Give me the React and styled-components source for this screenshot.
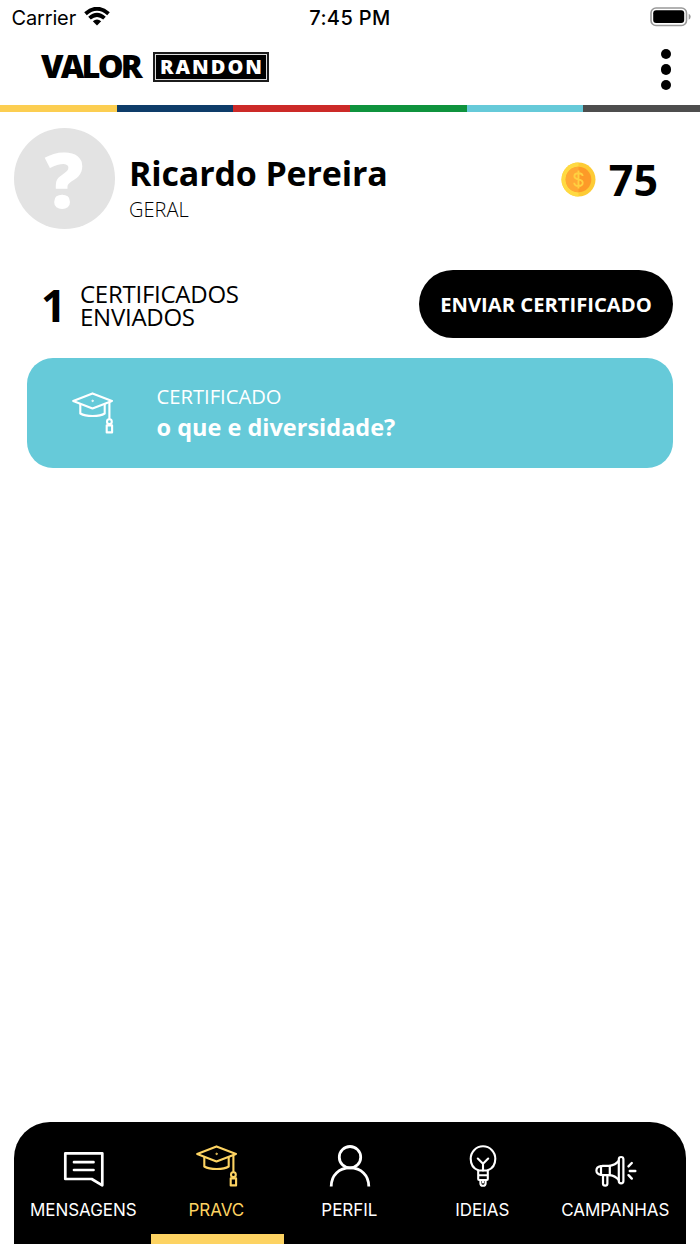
import styled, { createGlobalStyle } from "styled-components";

const tabs = [
  { label: "MENSAGENS", icon: MessageIcon },
  { label: "PRAVC", icon: CapIcon, active: true },
  { label: "PERFIL", icon: ProfileIcon },
  { label: "IDEIAS", icon: IdeaIcon },
  { label: "CAMPANHAS", icon: CampaignIcon },
];

const stripes = ["#fcce51", "#0e3c69", "#cc2a28", "#0f933d", "#66cad9", "#4d4d4d"];

function WifiIcon() {
  return (
    <svg width="26" height="19" viewBox="0 0 26 19">
      <g fill="none" stroke="#000" strokeWidth="3.9">
        <path d="M1.5 6.8 Q13 -3.3 24.5 6.8" />
        <path d="M5.5 11.1 Q13 4.6 20.5 11.1" />
      </g>
      <path d="M8.8 14.2 Q13 10.9 17.2 14.2 L13 18.4 Z" />
    </svg>
  );
}

function BatteryIcon() {
  return (
    <svg width="41" height="20" viewBox="0 0 41 20">
      <rect x="1" y="1" width="35.5" height="17.5" rx="5" fill="none" stroke="#999" strokeWidth="1.6" />
      <rect x="3.2" y="3.3" width="31" height="12.8" rx="3" />
      <path d="M38.7 6.8 Q40.7 7.7 40.7 9.8 Q40.7 12 38.7 12.8 Z" fill="#999" />
    </svg>
  );
}

function CoinIcon() {
  return (
    <svg width="35" height="35" viewBox="0 0 35 35">
      <circle cx="17.5" cy="17.5" r="17" fill="#fdcb35" />
      <path d="M17.5 .5 A17 17 0 0 0 17.5 34.5 Z" fill="#ffda42" />
      <circle cx="17.5" cy="17.5" r="12.8" fill="#fd9a28" />
      <path d="M17.5 4.7 A12.8 12.8 0 0 0 17.5 30.3 Z" fill="#ffa834" />
      <path
        d="M21.6 14.1 C21.6 11.8 19.8 11.2 17.5 11.2 C15 11.2 13.4 12.2 13.4 14.2 C13.4 16.4 15.2 16.9 17.5 17.4 C20 17.9 21.7 18.6 21.7 20.8 C21.7 23 19.9 24 17.5 24 C15 24 13.2 23 13.2 20.8 M17.5 8.6 V26.4"
        fill="none"
        stroke="#ffd040"
        strokeWidth="1.9"
      />
    </svg>
  );
}

function CapIcon() {
  return (
    <svg width="42" height="42" viewBox="0 0 42 42" fill="none" stroke="currentColor" strokeWidth="2.1" strokeLinejoin="round" strokeLinecap="round">
      <path d="M1.2 8.9 L20.5 1.4 L40 8.9 L20.5 16.4 Z" />
      <path d="M8.3 12.2 V21.5 C14 24.8 27.5 24.8 32.7 21.5 V12.2" />
      <path d="M37.4 10 V27" />
      <circle cx="37.4" cy="29.7" r="2.4" />
      <path d="M34.7 33.4 H40.1 V40.4 H34.7 Z" />
      <circle cx="20.5" cy="8.9" r=".7" strokeWidth="1" />
    </svg>
  );
}

function MessageIcon() {
  return (
    <svg width="42" height="42" viewBox="0 0 42 42" fill="none" stroke="currentColor" strokeWidth="2.7" strokeLinejoin="round" strokeLinecap="round">
      <path d="M2.3 8.3 H39.3 V40.3 L28.7 34 H2.3 Z" />
      <path d="M11 17.2 H30.5 M11 25 H30.5" />
    </svg>
  );
}

function ProfileIcon() {
  return (
    <svg width="42" height="42" viewBox="0 0 42 42" fill="none" stroke="currentColor" strokeWidth="2.8">
      <circle cx="21" cy="12.2" r="10.7" />
      <path d="M2.2 41.5 C2.2 30 10 22.9 21 22.9 C32 22.9 39.8 30 39.8 41.5" />
    </svg>
  );
}

function IdeaIcon() {
  return (
    <svg width="42" height="42" viewBox="0 0 42 42" fill="none" stroke="currentColor" strokeWidth="2.1" strokeLinejoin="round" strokeLinecap="round">
      <path d="M16.2 25.3 C11.5 23.6 8.7 19 8.7 13.8 C8.7 6.7 14.2 1.3 21 1.3 C27.8 1.3 33.3 6.7 33.3 13.8 C33.3 19 30.5 23.6 25.8 25.3" />
      <path d="M21 25.5 V18.8 M15.8 13.6 L21 18.8 L26.2 13.6" />
      <path d="M16.2 25.5 H25.8 V34 Q25.8 35 24.8 35 H17.2 Q16.2 35 16.2 34 Z M16.2 30.3 H25.8" />
      <path d="M18.4 35.2 V38.2 Q18.4 40.8 21 40.8 Q23.6 40.8 23.6 38.2 V35.2 M21 36.5 V37.5" />
    </svg>
  );
}

function CampaignIcon() {
  return (
    <svg width="42" height="42" viewBox="0 0 42 42" fill="none" stroke="currentColor" strokeWidth="2.2" strokeLinejoin="round" strokeLinecap="round">
      <rect x="23.8" y="12" width="4.6" height="26.4" rx="2.3" />
      <path d="M23.8 15.8 C21.2 19 18.4 20.4 14.8 20.8 V30.2 C18.4 30.6 21.2 32 23.8 35" />
      <path d="M14.8 20.8 H7.6 Q6 20.8 6 22.4 V28.6 Q6 30.2 7.6 30.2 H14.8" />
      <path d="M5.8 21.2 Q1.4 22 1.4 25.5 Q1.4 29 5.8 29.8" />
      <path d="M8 30.4 V38.5 Q8 40.6 10.2 40.6 Q12.4 40.6 12.4 38.5 V30.4" />
      <path d="M33.5 21.4 L36.8 18 M34.8 26 H40.3 M33.5 30.2 L36.8 33.6" strokeWidth="2.4" />
    </svg>
  );
}

function App() {
  return (
    <Container>
      <GlobalStyle />
      <StatusBar>
        <Carrier>
          <span>Carrier</span>
          <WifiIcon />
        </Carrier>
        <Time>7:45 PM</Time>
        <Battery>
          <BatteryIcon />
        </Battery>
      </StatusBar>

      <Header>
        <Logo>
          <LogoText>VALOR</LogoText>
          <LogoBox>
            <LogoPlate>RANDON</LogoPlate>
          </LogoBox>
        </Logo>
        <MenuBtn aria-label="Menu">
          <Dot />
          <Dot />
          <Dot />
        </MenuBtn>
      </Header>

      <Stripes>
        {stripes.map((color) => (
          <Stripe key={color} $color={color} />
        ))}
      </Stripes>

      <UserBox>
        <Avatar>?</Avatar>
        <UserInfo>
          <UserName>Ricardo Pereira</UserName>
          <UserGroup>GERAL</UserGroup>
        </UserInfo>
        <Coins>
          <CoinIcon />
          <span>75</span>
        </Coins>
      </UserBox>

      <Summary>
        <Count>1</Count>
        <CountLabel>
          CERTIFICADOS
          <br />
          ENVIADOS
        </CountLabel>
        <SendBtn>ENVIAR CERTIFICADO</SendBtn>
      </Summary>

      <Card>
        <CapIcon />
        <CardText>
          <CardType>CERTIFICADO</CardType>
          <CardTitle>o que e diversidade?</CardTitle>
        </CardText>
      </Card>

      <TabBar>
        {tabs.map(({ label, icon: Icon, active }) => (
          <Tab key={label} $active={active}>
            <Icon />
            <TabLabel>{label}</TabLabel>
          </Tab>
        ))}
      </TabBar>
    </Container>
  );
}

const GlobalStyle = createGlobalStyle`
  * {
    box-sizing: border-box;
  }
  body {
    margin: 0;
    background: #fff;
  }
  svg {
    display: block;
    flex: none;
  }
`;

const Container = styled.div`
  width: 700px;
  height: 1244px;
  display: flex;
  flex-direction: column;
  overflow: hidden;
  background: #fff;
  color: #000;
  font-family: "Open Sans", sans-serif;
  white-space: nowrap;
`;

const StatusBar = styled.div`
  height: 36px;
  padding: 0 9px;
  display: grid;
  grid-template-columns: 1fr auto 1fr;
  font-family: Inter, sans-serif;
  font-size: 20px;
  line-height: 36px;
`;

const Carrier = styled.div`
  display: flex;
  gap: 8px;
  padding-left: 2.5px;
  letter-spacing: -0.15px;
  svg {
    margin-top: 7px;
  }
`;

const Time = styled.div`
  font-weight: 500;
  letter-spacing: 0.4px;
`;

const Battery = styled.div`
  display: flex;
  justify-content: flex-end;
  padding-top: 7px;
`;

const Header = styled.header`
  height: 69px;
  padding: 13px 28px 0 41px;
  display: flex;
  justify-content: space-between;
  align-items: flex-start;
`;

const Logo = styled.div`
  display: flex;
  align-items: flex-start;
`;

const LogoText = styled.div`
  width: 112px;
  font-size: 32.5px;
  font-weight: 800;
  line-height: 34px;
  letter-spacing: -2.8px;
`;

const LogoBox = styled.div`
  width: 116px;
  height: 30px;
  margin-top: 3px;
  padding: 1px;
  border: 2px solid #1c1c1c;
  background: #ddd;
`;

const LogoPlate = styled.div`
  height: 24px;
  background: #000;
  color: #fff;
  font-size: 20px;
  font-weight: 800;
  line-height: 24px;
  letter-spacing: 2px;
  text-indent: 2px;
  text-align: center;
`;

const MenuBtn = styled.button`
  width: 12px;
  padding: 0;
  border: none;
  background: none;
  display: flex;
  flex-direction: column;
  align-items: center;
  gap: 5px;
`;

const Dot = styled.span`
  width: 10.4px;
  height: 10.4px;
  border-radius: 50%;
  background: #000;
`;

const Stripes = styled.div`
  height: 6.6px;
  flex: none;
  display: flex;
`;

const Stripe = styled.div`
  flex: 1;
  background: ${({ $color }) => $color};
`;

const UserBox = styled.section`
  height: 158.7px;
  padding: 16.7px 42px 0 14px;
  display: flex;
  align-items: flex-start;
`;

const Avatar = styled.div`
  width: 100.6px;
  height: 100.6px;
  border-radius: 50%;
  background: #e3e3e3;
  color: #fff;
  font-size: 77px;
  font-weight: 800;
  line-height: 102px;
  text-align: center;
`;

const UserInfo = styled.div`
  flex: 1;
  padding: 22px 0 0 14.4px;
`;

const UserName = styled.h1`
  margin: 0;
  font-size: 34px;
  font-weight: 700;
  line-height: 46px;
  letter-spacing: -0.16px;
`;

const UserGroup = styled.div`
  padding-top: 1px;
  font-size: 20px;
  font-weight: 300;
  line-height: 26px;
`;

const Coins = styled.div`
  display: flex;
  align-items: center;
  gap: 13px;
  height: 102px;
  font-size: 43px;
  font-weight: 700;
  line-height: 60px;
  span {
    padding-top: 2px;
  }
`;

const Summary = styled.section`
  height: 87.7px;
  padding: 0 27px 0 41px;
  display: flex;
  align-items: flex-start;
`;

const Count = styled.div`
  width: 39px;
  font-size: 44px;
  font-weight: 700;
  line-height: 70px;
`;

const CountLabel = styled.div`
  flex: 1;
  padding-top: 12.2px;
  font-size: 24px;
  line-height: 23px;
  letter-spacing: -0.26px;
`;

const SendBtn = styled.button`
  width: 254px;
  height: 67.6px;
  padding: 1px 0 0;
  border: none;
  border-radius: 34px;
  background: #000;
  color: #fff;
  font: 700 20.2px/67px "Open Sans", sans-serif;
`;

const Card = styled.article`
  height: 109.6px;
  margin: 0 27px;
  padding: 24px 45px;
  display: flex;
  align-items: flex-start;
  gap: 42.5px;
  border-radius: 26px;
  background: #66cad9;
  color: #fff;
  > svg {
    margin-top: 10.5px;
  }
`;

const CardText = styled.div`
  display: flex;
  flex-direction: column;
`;

const CardType = styled.div`
  font-size: 20.2px;
  line-height: 28px;
`;

const CardTitle = styled.div`
  padding-top: 1px;
  font-size: 23.5px;
  font-weight: 700;
  line-height: 32px;
`;

const TabBar = styled.nav`
  height: 122px;
  margin: auto 14px 0;
  padding: 0 3.5px;
  display: flex;
  border-radius: 36px 36px 0 0;
  background: #000;
`;

const Tab = styled.div`
  flex: 1;
  padding-top: 23px;
  display: flex;
  flex-direction: column;
  align-items: center;
  gap: 11px;
  border-bottom: 10px solid ${({ $active }) => ($active ? "#fdd362" : "transparent")};
  color: ${({ $active }) => ($active ? "#fdd362" : "#fff")};
`;

const TabLabel = styled.span`
  margin-right: 1.4px;
  font-family: Inter, sans-serif;
  font-size: 17px;
  line-height: 24px;
  letter-spacing: -0.05px;
`;

export default App;
